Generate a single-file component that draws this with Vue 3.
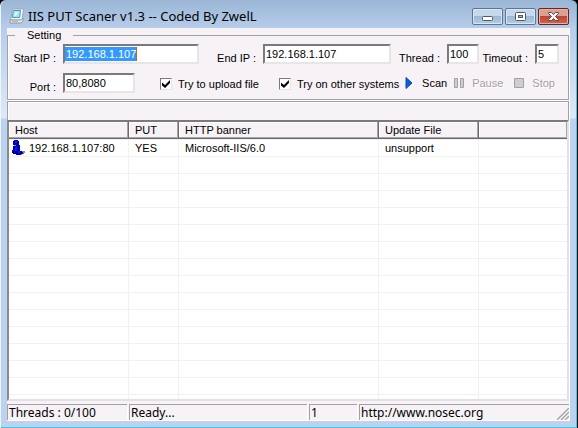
<script setup>
import { ref } from 'vue'

const startIp = ref('192.168.1.107')
const endIp = ref('192.168.1.107')
const thread = ref('100')
const timeout = ref('5')
const port = ref('80,8080')
const upload = ref(true)
const others = ref(true)

const results = [
  { host: '192.168.1.107:80', put: 'YES', banner: 'Microsoft-IIS/6.0', update: 'unsupport' },
]
const emptyRows = 30
</script>

<template>
  <div class="window">
    <header class="titlebar">
      <svg class="app-icon" width="16" height="16" viewBox="0 0 16 16" aria-hidden="true">
        <path d="M3.5 1h10l1 1-1.5 10H1.5z" fill="#f4f8fa" stroke="#9aa7b0" />
        <path d="M4.5 2.5h7l-.8 7H3.2z" fill="#a4e2f0" stroke="#4a9ab8" />
        <path d="M6 4h4l-3 4H5z" fill="#d4f5fb" />
        <path d="M1 12h11l2-2v3l-2 2H1z" fill="#e8edf0" stroke="#8c9aa4" />
        <path d="M3 13.5h6" stroke="#a9b6bf" />
      </svg>
      <h1>IIS PUT Scaner v1.3 -- Coded By ZwelL</h1>
      <div class="caption">
        <button type="button" aria-label="Minimize">
          <svg width="13" height="11" viewBox="0 0 13 11"><rect x="1.5" y="5.5" width="10" height="4" rx="1" fill="#fff" stroke="#535666" /></svg>
        </button>
        <button type="button" aria-label="Maximize">
          <svg width="13" height="11" viewBox="0 0 13 11"><rect x="1.5" y="1.5" width="10" height="8" rx="1" fill="#fff" stroke="#535666" /><rect x="4.5" y="4.5" width="4" height="2" fill="#9db8d6" stroke="#535666" /></svg>
        </button>
        <button type="button" class="close" aria-label="Close">
          <svg width="13" height="11" viewBox="0 0 13 11"><path d="M1.5 1.5h3l2 2 2-2h3v1l-3 3 3 3v1h-3l-2-2-2 2h-3v-1l3-3-3-3z" fill="#fff" stroke="#5a4654" /></svg>
        </button>
      </div>
    </header>

    <main class="client">
      <fieldset class="setting">
        <legend>Setting</legend>
        <div class="row fields">
          <label for="start">Start IP :</label>
          <span class="field"><mark>{{ startIp }}</mark><input id="start" v-model="startIp" class="selected" type="text" /></span>
          <label for="end">End IP :</label>
          <input id="end" v-model="endIp" type="text" />
          <label for="thread">Thread :</label>
          <input id="thread" v-model="thread" type="text" />
          <label for="timeout">Timeout :</label>
          <input id="timeout" v-model="timeout" type="text" />
        </div>
        <div class="row options">
          <label for="port" class="port">Port :</label>
          <input id="port" v-model="port" type="text" />
          <label class="check upload"><input v-model="upload" type="checkbox" />Try to upload file</label>
          <label class="check"><input v-model="others" type="checkbox" />Try on other systems</label>
          <div class="actions">
            <button type="button">
              <svg width="10" height="13" viewBox="0 0 10 13"><path d="M1 .5v11l6-5.5z" fill="#0a5fd8" stroke="#0848b0" /></svg>Scan
            </button>
            <button type="button" disabled>
              <svg width="11" height="13" viewBox="0 0 11 13"><path d="M.5 1.5h3v9h-3zM6.5 1.5h3v9h-3z" fill="#d0cdd0" stroke="#a3a0a3" /></svg>Pause
            </button>
            <button type="button" disabled>
              <svg width="11" height="13" viewBox="0 0 11 13"><path d="M.5 1.5h9v9h-9z" fill="#d0cdd0" stroke="#a3a0a3" /></svg>Stop
            </button>
          </div>
        </div>
      </fieldset>

      <div class="strip"></div>

      <section class="list">
        <table>
          <colgroup><col class="c-host" /><col class="c-put" /><col class="c-banner" /><col class="c-update" /><col /></colgroup>
          <thead>
            <tr>
              <th><div>Host</div></th>
              <th><div>PUT</div></th>
              <th><div>HTTP banner</div></th>
              <th><div>Update File</div></th>
              <th><div class="rest"></div></th>
            </tr>
          </thead>
          <tbody>
            <tr v-for="r in results" :key="r.host">
              <td>
                <div class="host">
                  <svg width="16" height="16" viewBox="0 0 16 16" shape-rendering="crispEdges" aria-hidden="true">
                    <path d="M9 12h2v-1h3v2h-1v1h-2v1H8z" fill="#8c8c8c" />
                    <path d="M3 0h4v1h1v4h1v6h2v1h1v2h-2v1H5v-1H2v-1H1v-3h1V6h1V5H2V1h1z" fill="#0000b8" />
                    <path d="M4 1h2v2H4zM4 7h2v4H4zM7 11h2v2H7z" fill="#0a1ae8" />
                    <path d="M6 3h2v2H6zM2 13h4v1H2z" fill="#000060" />
                    <path d="M3 5h2v1H3z" fill="#4a9ad8" />
                  </svg>{{ r.host }}
                </div>
              </td>
              <td>{{ r.put }}</td>
              <td>{{ r.banner }}</td>
              <td>{{ r.update }}</td>
              <td></td>
            </tr>
            <tr v-for="n in emptyRows" :key="n"><td></td><td></td><td></td><td></td><td></td></tr>
          </tbody>
        </table>
      </section>

      <footer class="status">
        <div>Threads : 0/100</div>
        <div>Ready...</div>
        <div>1</div>
        <div class="url">
          http://www.nosec.org
          <svg width="12" height="12" viewBox="0 0 12 12" aria-hidden="true"><path d="M0 12L12 0M4 12l8-8M8 12l4-4" stroke="#a5a2a8" stroke-width="1.4" /></svg>
        </div>
      </footer>
    </main>
  </div>
</template>

<style>
body {
  background: #000;
}
</style>

<style scoped>
* {
  box-sizing: border-box;
}
.window {
  height: 100vh;
  min-height: 240px;
  margin-right: 1px;
  display: flex;
  flex-direction: column;
  padding: 0 7px 7px 6px;
  border: solid #eef6fd;
  border-width: 0 0 0 1px;
  border-radius: 6px 6px 0 0;
  box-shadow: inset -1px -1px #38c8e8;
  background: linear-gradient(#9ab5d5, #b6cdea 28px, #dceaf7 118px, #bbd2f0 119px);
  font: 11px/13px "Liberation Sans", Arial, sans-serif;
  color: #000;
}
.titlebar {
  display: flex;
  height: 28px;
  flex: none;
  padding: 0 1px 0 2px;
}
.app-icon {
  margin-top: 8px;
}
h1 {
  flex: 1;
  margin: 8px 0 0 3px;
  font: 13px/17px "Noto Sans", "Open Sans", sans-serif;
  white-space: nowrap;
}
.caption {
  display: flex;
  gap: 2px;
  margin-top: 8px;
}
.caption button {
  display: flex;
  align-items: center;
  justify-content: center;
  width: 31px;
  height: 17px;
  padding: 0;
  border: 1px solid #5f7690;
  border-radius: 2px;
  background: linear-gradient(#c6d8eb 50%, #9db8d6 50%, #b4cbe4);
  box-shadow: inset 0 0 0 1px #d8e6f4;
}
.caption .close {
  border-color: #6b2520;
  background: linear-gradient(#dca090 50%, #be4532 50%, #cf6650);
  box-shadow: inset 0 0 0 1px #e6b0a4;
}
.client {
  flex: 1;
  min-height: 0;
  display: flex;
  flex-direction: column;
  padding-top: 1px;
  border-right: 1px solid #fff;
  border-bottom: 1px solid #fff;
  background: #f6f2f6;
}
.setting {
  flex: none;
  min-width: 0;
  height: 71px;
  margin: 0;
  padding: 2px 9px 0 0;
  border: 1px solid #a3a0a3;
  box-shadow: 0 1px #fff, inset 1px 0 #fff;
}
legend {
  margin-left: 7px;
  padding: 0 12px;
  line-height: 13px;
}
.row {
  display: grid;
}
.fields {
  grid-template-columns: 55px 136fr 64px 128fr 56px 32px 56px 24px;
  height: 29px;
}
.fields label,
.port {
  padding: 8px 7px 0 0;
  text-align: right;
  white-space: nowrap;
}
.field {
  position: relative;
  display: flex;
  min-width: 0;
  height: 20px;
  background: #fff;
}
.field mark {
  position: absolute;
  left: 2px;
  top: 3px;
  height: 14px;
  padding-left: 1px;
  background: #3399ff;
  color: transparent;
  border-right: 1px solid #b86818;
}
input[type="text"] {
  width: 100%;
  min-width: 0;
  height: 20px;
  margin: 0;
  padding: 0 0 1px 1px;
  border: 2px solid;
  border-color: #7c797c #e8e4e8 #e8e4e8 #7c797c;
  border-radius: 0;
  outline: 0;
  background: #fff;
  font: inherit;
  color: #000;
}
.field .selected {
  position: relative;
  background: transparent;
  color: #fff;
}
.options {
  grid-template-columns: 55px 72px auto auto 1fr;
}
.check {
  display: flex;
  align-items: center;
  gap: 6px;
  height: 22px;
  margin-left: 20px;
  white-space: nowrap;
}
.upload {
  margin-left: 25px;
}
input[type="checkbox"] {
  appearance: none;
  width: 12px;
  height: 12px;
  margin: 0;
  border: 1px solid;
  border-color: #7c797c #e8e4e8 #e8e4e8 #7c797c;
  background: #fff;
}
input[type="checkbox"]:checked::before {
  content: "";
  display: block;
  width: 8px;
  height: 8px;
  margin: 1px;
  background: #000;
  clip-path: polygon(0 30%, 38% 62%, 100% 0, 100% 38%, 38% 100%, 0 68%);
}
.actions {
  display: flex;
  justify-content: flex-end;
  gap: 7px;
  height: 20px;
  padding-right: 4px;
}
.actions button {
  display: flex;
  align-items: center;
  gap: 7px;
  padding: 0;
  border: 0;
  background: none;
  font: inherit;
  color: #000;
}
.actions button:disabled {
  color: #a3a0a3;
  text-shadow: 1px 1px #fff;
}
.actions button:last-child {
  margin-left: 4px;
}
.strip {
  flex: none;
  height: 19px;
  margin-top: 1px;
  border: 1px solid #a3a0a3;
  border-width: 1px 1px 0;
  box-shadow: inset 1px 1px #fff;
}
.list {
  flex: 1;
  min-height: 0;
  overflow: hidden;
  border: 2px solid;
  border-color: #7c797c #e4e0e4 #e4e0e4 #8c898c;
  background: #fff;
}
table {
  width: 100%;
  table-layout: fixed;
  border-collapse: separate;
  border-spacing: 0;
}
.c-host {
  width: 120px;
}
.c-put {
  width: 50px;
}
.c-banner {
  width: 200px;
}
.c-update {
  width: 100px;
}
th {
  height: 18px;
  padding: 0;
  border-bottom: 1px solid #f3f0f3;
  font-weight: normal;
  text-align: left;
}
th div {
  height: 17px;
  padding: 2px 0 0 6px;
  border-right: 1px solid #6c696c;
  border-bottom: 1px solid #6c696c;
  background: #f6f2f6;
  box-shadow: inset -1px -1px #a8a5a8, inset 1px 1px #fff;
  white-space: nowrap;
}
th .rest {
  border-right: 0;
}
td {
  height: 17px;
  padding: 0 0 0 6px;
  border: solid #f3f0f3;
  border-width: 0 1px 1px 0;
  white-space: nowrap;
}
td:first-child {
  padding-left: 2px;
}
td:last-child {
  border-right: 0;
}
.host {
  display: flex;
  align-items: center;
  gap: 2px;
}
.status {
  flex: none;
  display: grid;
  grid-template-columns: 120px 178px 48px 1fr;
  gap: 2px;
  margin-top: 3px;
  font: 12px/15px "Noto Sans", "Open Sans", sans-serif;
}
.status div {
  height: 16px;
  padding-left: 1px;
  border: solid #a3a0a3;
  border-width: 1px 0 0 1px;
  box-shadow: 1px 0 #fff;
  white-space: nowrap;
}
.status .url {
  display: flex;
  justify-content: space-between;
  align-items: flex-end;
}
</style>
